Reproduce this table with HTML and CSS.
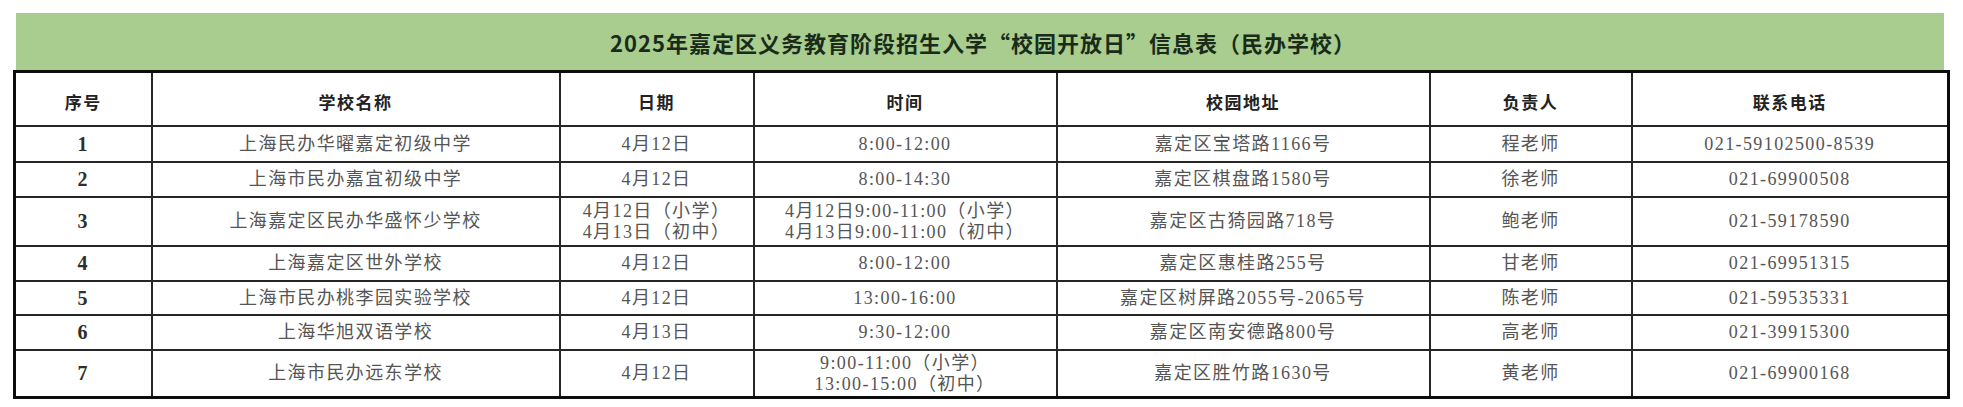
FILE: index.html
```html
<!DOCTYPE html>
<html lang="zh-CN">
<head>
<meta charset="utf-8">
<link rel="stylesheet" href="styles.css">
<title>2025年嘉定区义务教育阶段招生入学“校园开放日”信息表（民办学校）</title>
</head>
<body>
<div class="sheet">
  <div class="title">2025年嘉定区义务教育阶段招生入学“校园开放日”信息表（民办学校）</div>
  <table class="grid">
    <colgroup>
      <col class="c1"><col class="c2"><col class="c3"><col class="c4"><col class="c5"><col class="c6"><col class="c7">
    </colgroup>
    <thead>
      <tr class="head">
        <th>序号</th><th>学校名称</th><th>日期</th><th>时间</th><th>校园地址</th><th>负责人</th><th>联系电话</th>
      </tr>
    </thead>
    <tbody>
      <tr class="r1">
        <td class="no">1</td><td>上海民办华曜嘉定初级中学</td><td>4月12日</td><td>8:00-12:00</td><td>嘉定区宝塔路1166号</td><td>程老师</td><td>021-59102500-8539</td>
      </tr>
      <tr class="r2">
        <td class="no">2</td><td>上海市民办嘉宜初级中学</td><td>4月12日</td><td>8:00-14:30</td><td>嘉定区棋盘路1580号</td><td>徐老师</td><td>021-69900508</td>
      </tr>
      <tr class="r3">
        <td class="no">3</td><td>上海嘉定区民办华盛怀少学校</td><td>4月12日（小学）<br>4月13日（初中）</td><td>4月12日9:00-11:00（小学）<br>4月13日9:00-11:00（初中）</td><td>嘉定区古猗园路718号</td><td>鲍老师</td><td>021-59178590</td>
      </tr>
      <tr class="r4">
        <td class="no">4</td><td>上海嘉定区世外学校</td><td>4月12日</td><td>8:00-12:00</td><td>嘉定区惠桂路255号</td><td>甘老师</td><td>021-69951315</td>
      </tr>
      <tr class="r5">
        <td class="no">5</td><td>上海市民办桃李园实验学校</td><td>4月12日</td><td>13:00-16:00</td><td>嘉定区树屏路2055号-2065号</td><td>陈老师</td><td>021-59535331</td>
      </tr>
      <tr class="r6">
        <td class="no">6</td><td>上海华旭双语学校</td><td>4月13日</td><td>9:30-12:00</td><td>嘉定区南安德路800号</td><td>高老师</td><td>021-39915300</td>
      </tr>
      <tr class="r7">
        <td class="no">7</td><td>上海市民办远东学校</td><td>4月12日</td><td>9:00-11:00（小学）<br>13:00-15:00（初中）</td><td>嘉定区胜竹路1630号</td><td>黄老师</td><td>021-69900168</td>
      </tr>
    </tbody>
  </table>
</div>
</body>
</html>
```
FILE: styles.css
```css
html, body {
  margin: 0;
  padding: 0;
  background: #ffffff;
}
.sheet {
  padding: 13px 0 0 13px;
  width: 1934px;
}
.title {
  margin-left: 3px;
  width: 1928px;
  height: 57px;
  background: #a8cd8e;
  color: #1a2b1a;
  font-family: "Noto Sans CJK SC", "Noto Sans", sans-serif;
  font-weight: 700;
  font-size: 22px;
  letter-spacing: 1px;
  display: flex;
  align-items: center;
  justify-content: center;
  padding-left: 6px;
  box-sizing: border-box;
}
.grid {
  width: 1934px;
  border-collapse: collapse;
  table-layout: fixed;
  border: 3px solid #0d0d0d;
}
.c1 { width: 137px; }
.c2 { width: 408px; }
.c3 { width: 194px; }
.c4 { width: 303px; }
.c5 { width: 373px; }
.c6 { width: 202px; }
.c7 { width: 317px; }
.grid th, .grid td {
  border: 2px solid #262626;
  text-align: center;
  vertical-align: middle;
  padding: 0;
}
.grid th {
  font-family: "Noto Sans CJK SC", "Noto Sans", sans-serif;
  font-weight: 700;
  font-size: 17px;
  letter-spacing: 1.5px;
  color: #222;
  height: 48px;
  padding-top: 4px;
}
.grid td {
  font-family: "Liberation Serif", "Noto Sans CJK SC", serif;
  font-size: 18px;
  letter-spacing: 1.4px;
  color: #555;
  line-height: 21px;
}
.grid td.no {
  font-weight: 700;
  color: #2e2e2e;
  font-size: 20px;
}
.r1 td { height: 34px; }
.r2 td { height: 33px; }
.r3 td { height: 47px; }
.r4 td { height: 33px; }
.r5 td { height: 32px; }
.r6 td { height: 33px; }
.r7 td { height: 45px; }
```
